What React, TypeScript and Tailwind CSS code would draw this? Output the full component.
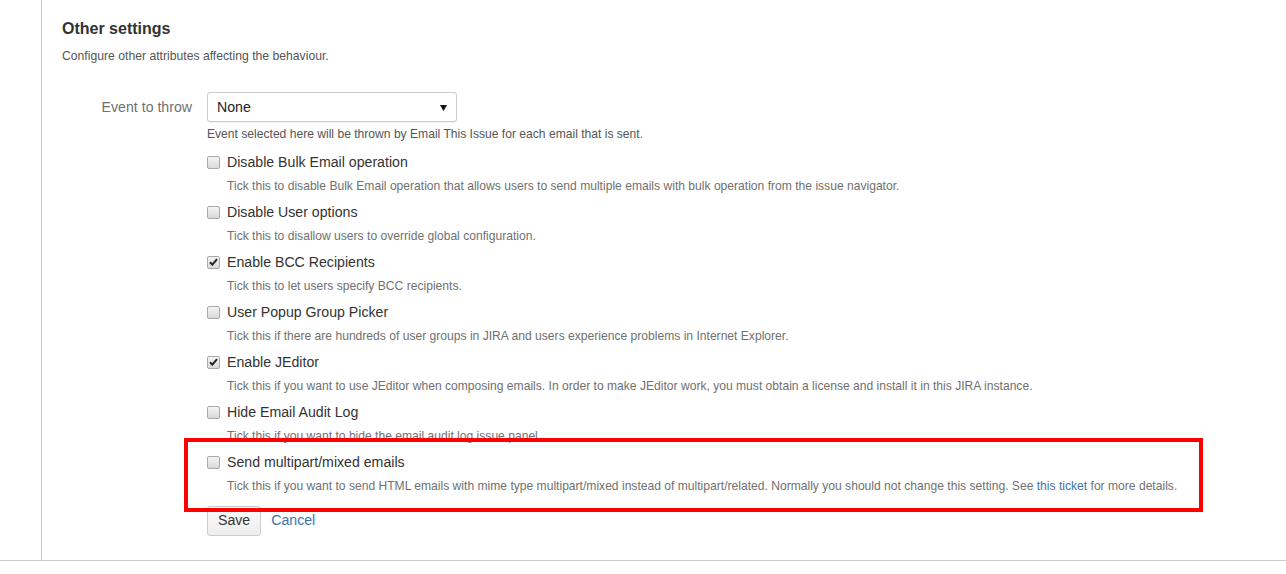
import React from "react";

const rows: { label: string; checked: boolean; help: React.ReactNode }[] = [
  {
    label: "Disable Bulk Email operation",
    checked: false,
    help: "Tick this to disable Bulk Email operation that allows users to send multiple emails with bulk operation from the issue navigator.",
  },
  {
    label: "Disable User options",
    checked: false,
    help: "Tick this to disallow users to override global configuration.",
  },
  {
    label: "Enable BCC Recipients",
    checked: true,
    help: "Tick this to let users specify BCC recipients.",
  },
  {
    label: "User Popup Group Picker",
    checked: false,
    help: "Tick this if there are hundreds of user groups in JIRA and users experience problems in Internet Explorer.",
  },
  {
    label: "Enable JEditor",
    checked: true,
    help: "Tick this if you want to use JEditor when composing emails. In order to make JEditor work, you must obtain a license and install it in this JIRA instance.",
  },
  {
    label: "Hide Email Audit Log",
    checked: false,
    help: "Tick this if you want to hide the email audit log issue panel.",
  },
  {
    label: "Send multipart/mixed emails",
    checked: false,
    help: (
      <>
        Tick this if you want to send HTML emails with mime type multipart/mixed instead of multipart/related. Normally you
        should not change this setting. See <span className="text-[#3b73af]">this ticket</span> for more details.
      </>
    ),
  },
];

function Checkbox({ checked }: { checked: boolean }) {
  return (
    <span className="relative inline-flex h-[13px] w-[13px] shrink-0 items-center justify-center rounded-[2px] border border-[#a9a9a9] bg-gradient-to-b from-[#f4f4f4] to-[#d9d9d9]">
      {checked && (
        <svg width="9" height="8" viewBox="0 0 9 8" className="absolute">
          <path d="M1 4.2 L3.4 6.6 L8 1.2" fill="none" stroke="#222" strokeWidth="2" />
        </svg>
      )}
    </span>
  );
}

export default function App() {
  return (
    <div
      className="relative w-[1286px] h-[574px] bg-white"
      style={{ fontFamily: '"Liberation Sans", Arial, sans-serif' }}
    >
      <div className="flex border-b border-[#cccccc] h-[561px]">
        <div className="w-[41px] shrink-0" />
        <div className="flex-1 border-l border-[#cccccc] pl-[20px] pt-[19px]">
          <h2 className="text-[16px] leading-[20px] font-bold text-[#333333]">Other settings</h2>
          <p className="mt-[9px] text-[12.2px] leading-[16px] text-[#555555]">
            Configure other attributes affecting the behaviour.
          </p>

          <div className="mt-[28px] flex">
            <div className="w-[145px] shrink-0 pr-[15px] text-right text-[14.15px] leading-[30px] text-[#707070]">
              Event to throw
            </div>
            <div>
              <div className="flex h-[30px] w-[250px] items-center justify-between rounded-[3px] border border-[#cccccc] bg-white pl-[9px] pr-[9px] pt-[1px] shadow-[0_1px_1px_rgba(0,0,0,0.05)]">
                <span className="text-[14.15px] text-[#222]">None</span>
                <svg width="7" height="6" viewBox="0 0 7 6">
                  <path d="M0 0 H7 L3.5 6 Z" fill="#111" />
                </svg>
              </div>
              <p className="mt-[4px] text-[12.1px] leading-[16px] text-[#555555]">
                Event selected here will be thrown by Email This Issue for each email that is sent.
              </p>

              <div className="mt-[10px] flex flex-col">
                {rows.map((r) => (
                  <div key={r.label} className="mb-[8px]">
                    <div className="flex h-[20px] items-center">
                      <Checkbox checked={r.checked} />
                      <span className="ml-[7px] text-[14.15px] leading-[20px] text-[#333333]">{r.label}</span>
                    </div>
                    <p className="mt-[6px] pl-[20px] text-[12.1px] leading-[16px] text-[#707070]">{r.help}</p>
                  </div>
                ))}
              </div>

              <div className="mt-[4px] flex items-center">
                <button className="h-[30px] rounded-[3px] border border-[#cccccc] bg-gradient-to-b from-[#fafafa] to-[#eeeeee] px-[10px] text-[14.15px] text-[#333333]">
                  Save
                </button>
                <span className="ml-[10px] text-[14.15px] text-[#3b73af]">Cancel</span>
              </div>
            </div>
          </div>
        </div>
      </div>

      <div className="pointer-events-none absolute left-[184px] top-[438px] h-[74px] w-[1019px] border-4 border-[#ff0000]" />
    </div>
  );
}
